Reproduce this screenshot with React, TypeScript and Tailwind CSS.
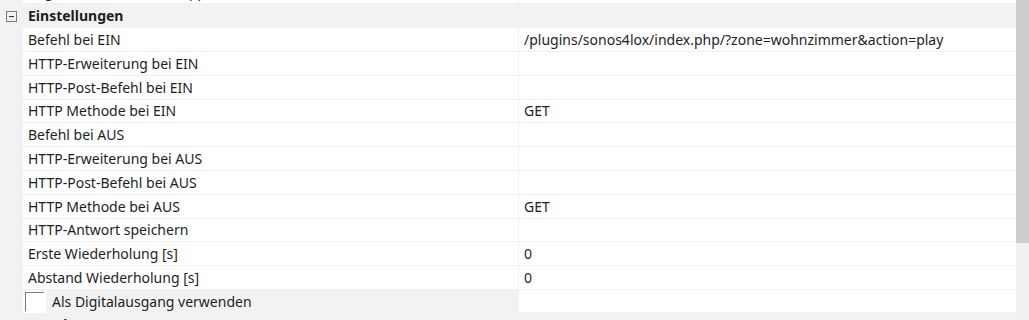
import React from "react";

const rows: { name: string; value?: string; short?: boolean }[] = [
  { name: "Befehl bei EIN", value: "/plugins/sonos4lox/index.php/?zone=wohnzimmer&action=play" },
  { name: "HTTP-Erweiterung bei EIN" },
  { name: "HTTP-Post-Befehl bei EIN" },
  { name: "HTTP Methode bei EIN", value: "GET", short: true },
  { name: "Befehl bei AUS" },
  { name: "HTTP-Erweiterung bei AUS" },
  { name: "HTTP-Post-Befehl bei AUS" },
  { name: "HTTP Methode bei AUS", value: "GET" },
  { name: "HTTP-Antwort speichern", short: true },
  { name: "Erste Wiederholung [s]", value: "0" },
  { name: "Abstand Wiederholung [s]", value: "0" },
];

function Minus() {
  return (
    <svg width="11" height="11" viewBox="0 0 11 11" className="block">
      <rect x="0.5" y="0.5" width="10" height="10" fill="none" stroke="#7a7a7a" />
      <line x1="3" y1="5.5" x2="8" y2="5.5" stroke="#333" />
    </svg>
  );
}

function Header({ label }: { label: string }) {
  return (
    <div className="flex h-[24px] shrink-0 items-center bg-[#f2f2f2]">
      <div className="w-[23px] flex justify-center">
        <Minus />
      </div>
      <div className="pl-[5px] font-bold text-[#1e1e1e]">{label}</div>
    </div>
  );
}

function Row({ name, value, short }: { name: string; value?: string; short?: boolean }) {
  return (
    <div className={short ? "flex h-[23px] shrink-0" : "flex h-[24px] shrink-0"}>
      <div className="w-[23px] bg-[#f2f2f2]" />
      <div className="w-[495px] bg-white border-b border-[#f0f0f0] flex items-center pl-[5px] text-[#1e1e1e] whitespace-nowrap overflow-hidden">
        {name}
      </div>
      <div className="w-[1px] bg-[#f0f0f0]" />
      <div className="flex-1 bg-white border-b border-[#f0f0f0] flex items-center pl-[5px] text-[#1e1e1e] whitespace-nowrap overflow-hidden">
        {value ?? ""}
      </div>
    </div>
  );
}

export default function App() {
  return (
    <div
      className="w-[1029px] h-[320px] overflow-hidden flex bg-[#f2f2f2] text-[14px] leading-none"
      style={{ fontFamily: '"Noto Sans", "Open Sans", sans-serif' }}
    >
      <div className="w-[1016px] flex flex-col">
        <div className="-mt-[20px] shrink-0">
          <Row name="Zugriff aus der Loxone App" />
        </div>
        <Header label="Einstellungen" />
        {rows.map((r) => (
          <Row key={r.name} name={r.name} value={r.value} short={r.short} />
        ))}
        <div className="flex h-[23px] shrink-0">
          <div className="w-[23px] bg-[#f2f2f2]" />
          <div className="w-[495px] flex items-center">
            <div className="w-[23px] h-[22px] bg-white relative">
              <div className="absolute left-[2px] top-[1px] w-[19px] h-[19px] border-l border-t border-[#7a7a7a]" />
            </div>
            <span className="pl-[6px] text-[#1e1e1e]">Als Digitalausgang verwenden</span>
          </div>
          <div className="w-[1px]" />
          <div className="flex-1 bg-white h-[22px]" />
        </div>
        <Header label="Kanal" />
      </div>
      <div className="w-[13px] flex flex-col">
        <div className="h-[243px] shrink-0 bg-[#cdcdcd]" />
        <div className="flex-1 bg-[#f0f0f0]" />
      </div>
    </div>
  );
}
